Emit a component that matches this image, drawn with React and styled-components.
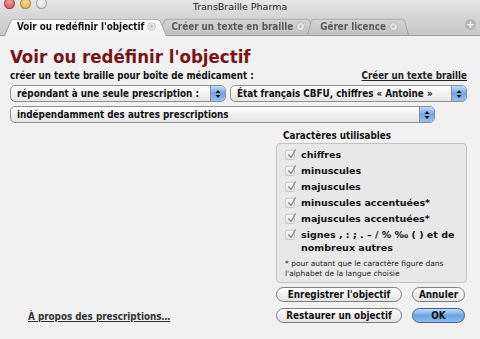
import React from "react";
import styled, { createGlobalStyle, css } from "styled-components";

const GlobalStyle = createGlobalStyle`
  html, body { margin: 0; padding: 0; background: #ececec; }
  body { font-family: "DejaVu Sans Condensed", "DejaVu Sans", sans-serif; }
`;

const Window = styled.div`
  width: 480px;
  height: 339px;
  background: #f1f1f1;
  display: flex;
  flex-direction: column;
  overflow: hidden;
`;

const TitleBar = styled.div`
  height: 14px;
  display: flex;
  align-items: flex-start;
  position: relative;
  background: linear-gradient(#e6e6e6, #d8d8d8);
`;

const Lights = styled.div`
  display: flex;
  gap: 5px;
  padding-left: 4px;
  margin-top: -2px;
`;

const Light = styled.span`
  width: 11px;
  height: 11px;
  border-radius: 50%;
  background: ${(p) => p.$c};
  box-shadow: inset 0 0 0 1px rgba(0, 0, 0, 0.25);
`;

const Title = styled.div`
  position: absolute;
  left: 0;
  right: 0;
  top: 1px;
  text-align: center;
  font-family: "DejaVu Sans", sans-serif;
  font-size: 9.5px;
  color: #222;
`;

const TabBar = styled.div`
  height: 21px;
  display: flex;
  align-items: flex-end;
  padding-left: 9px;
  background: linear-gradient(#d8d8d8, #c8c8c8);
  border-bottom: 1px solid #9b9b9b;
  position: relative;
`;

const Tab = styled.div`
  position: relative;
  height: 18px;
  display: flex;
  align-items: center;
  gap: 4px;
  padding: 0 7px 0 ${(p) => p.$pl || 8}px;
  margin-right: 1px;
  font-size: 9.8px;
  font-weight: bold;
  color: ${(p) => (p.$active ? "#111" : "#5a5a5a")};
  z-index: ${(p) => p.$z};
  &::before {
    content: "";
    position: absolute;
    top: 0;
    bottom: 0;
    left: -5px;
    right: -5px;
    z-index: -1;
    border: 1px solid #a2a2a2;
    border-bottom: none;
    border-radius: 4px 4px 0 0;
    transform: perspective(30px) rotateX(9deg);
    transform-origin: bottom;
    background: ${(p) =>
      p.$active ? "linear-gradient(#fafafa, #f1f1f1)" : "linear-gradient(#d4d4d4, #c2c2c2)"};
  }
  ${(p) =>
    p.$active &&
    css`
      height: 19px;
      margin-bottom: -1px;
    `}
`;

const TabClose = styled.span`
  width: 7px;
  height: 7px;
  border-radius: 50%;
  background: #c4c4c4;
  box-shadow: inset 0 0 0 2px #e4e4e4, 0 0 0 0.5px #aaa;
  display: inline-block;
`;

const AddTab = styled.span`
  position: absolute;
  right: 4px;
  top: 5px;
  width: 11px;
  height: 11px;
  border-radius: 50%;
  background: #b4b4b4;
  color: #fff;
  font-size: 11px;
  font-weight: bold;
  line-height: 11px;
  text-align: center;
`;

const Body = styled.div`
  flex: 1;
  padding: 9px 13px 0 10px;
  display: flex;
  flex-direction: column;
`;

const Heading = styled.h1`
  margin: 0;
  font-size: 18.5px;
  font-weight: bold;
  color: #7a1318;
  line-height: 24px;
`;

const LabelRow = styled.div`
  display: flex;
  justify-content: space-between;
  align-items: baseline;
  margin-top: 1px;
  font-size: 9.7px;
  font-weight: bold;
  color: #111;
`;

const Link = styled.span`
  text-decoration: underline;
  color: #222;
`;

const PopupRow = styled.div`
  display: flex;
  gap: 4px;
  margin-top: ${(p) => p.$top || 4}px;
`;

const Popup = styled.div`
  width: ${(p) => p.$w}px;
  height: 17px;
  box-sizing: border-box;
  display: flex;
  align-items: center;
  border: 1px solid #8e8e8e;
  border-radius: 5px;
  background: linear-gradient(#ffffff, #f1f1f1 50%, #e6e6e6);
  font-size: 9.8px;
  font-weight: bold;
  color: #111;
  overflow: hidden;
`;

const PopupText = styled.span`
  flex: 1;
  padding-left: 6px;
  white-space: nowrap;
`;

const PopupCap = styled.span`
  width: 14px;
  height: 100%;
  background: linear-gradient(#c2dbf7, #74a6e4 50%, #95c0f0);
  border-left: 1px solid #7a8fb0;
  display: flex;
  align-items: center;
  justify-content: center;
`;

const Lower = styled.div`
  flex: 1;
  display: flex;
  justify-content: space-between;
  margin-top: 7px;
`;

const AboutLink = styled.span`
  align-self: flex-end;
  margin: 0 0 17px 18px;
  font-size: 9.8px;
  font-weight: bold;
  color: #333;
  text-decoration: underline;
`;

const RightCol = styled.div`
  width: 191px;
  display: flex;
  flex-direction: column;
`;

const GroupTitle = styled.div`
  font-size: 9.8px;
  font-weight: bold;
  color: #111;
  padding-left: 7px;
  line-height: 12px;
`;

const GroupBox = styled.div`
  margin-top: 1px;
  border: 1px solid #c2c2c2;
  border-radius: 4px;
  background: #e8e8e8;
  padding: 4px 6px 3px 8px;
  display: flex;
  flex-direction: column;
`;

const CheckRow = styled.div`
  display: flex;
  align-items: flex-start;
  gap: 6px;
  font-family: "DejaVu Sans", sans-serif;
  font-size: 9.5px;
  font-weight: bold;
  color: #111;
  line-height: 13px;
  margin-bottom: 3px;
`;

const Box = styled.span`
  flex: none;
  width: 10px;
  height: 10px;
  margin-top: 2px;
  box-sizing: border-box;
  border: 1px solid #c8c8c8;
  border-radius: 2px;
  background: linear-gradient(#fafafa, #e8e8e8);
  position: relative;
`;

const Note = styled.div`
  margin-top: 2px;
  font-family: "DejaVu Sans", sans-serif;
  font-size: 7.5px;
  color: #222;
  line-height: 10px;
`;

const Buttons = styled.div`
  display: grid;
  grid-template-columns: 126px 53px;
  column-gap: 10px;
  row-gap: 6px;
  margin-top: 4px;
`;

const Button = styled.div`
  height: 15px;
  box-sizing: border-box;
  border: 1px solid #7d7d7d;
  border-radius: 8px;
  display: flex;
  align-items: center;
  justify-content: center;
  font-size: 9.8px;
  font-weight: bold;
  color: #111;
  ${(p) =>
    p.$primary
      ? css`
          background: linear-gradient(#c6dcf7, #6aa2e6 50%, #8ebcf1);
          border-color: #3f5f95;
        `
      : css`
          background: linear-gradient(#ffffff, #f0f0f0 50%, #e3e3e3);
        `}
`;

const Arrows = () => (
  <svg width="6" height="10" viewBox="0 0 6 10">
    <path d="M3 1 L5.5 4 L0.5 4 Z M3 9 L5.5 6 L0.5 6 Z" fill="#111" />
  </svg>
);

const Check = () => (
  <svg width="10" height="10" viewBox="0 0 10 10" style={{ position: "absolute", left: 1, top: -2 }}>
    <path d="M1.5 5.5 L4 8.5 L8.5 0.5" stroke="#8d8d8d" strokeWidth="1.5" fill="none" />
  </svg>
);

const items = [
  "chiffres",
  "minuscules",
  "majuscules",
  "minuscules accentuées*",
  "majuscules accentuées*",
  "signes , : ; . – / % ‰ ( ) et de nombreux autres",
];

export default function App() {
  return (
    <>
      <GlobalStyle />
      <Window>
        <TitleBar>
          <Lights>
            <Light $c="radial-gradient(circle at 50% 35%, #f4a0a0, #d23c3c)" />
            <Light $c="radial-gradient(circle at 50% 35%, #f7dc9a, #e0a12e)" />
            <Light $c="radial-gradient(circle at 50% 35%, #f6f6f6, #cfcfcf)" />
          </Lights>
          <Title>TransBraille Pharma</Title>
        </TitleBar>
        <TabBar>
          <Tab $active $z={3}>
            <span>Voir ou redéfinir l'objectif</span>
            <TabClose />
          </Tab>
          <Tab $z={1} $pl={8}>
            <span>Créer un texte en braille</span>
            <TabClose />
          </Tab>
          <Tab $z={2}>
            <span>Gérer licence</span>
            <TabClose />
          </Tab>
          <AddTab>+</AddTab>
        </TabBar>
        <Body>
          <Heading>Voir ou redéfinir l'objectif</Heading>
          <LabelRow>
            <span>créer un texte braille pour boîte de médicament :</span>
            <Link>Créer un texte braille</Link>
          </LabelRow>
          <PopupRow $top={4}>
            <Popup $w={216}>
              <PopupText>répondant à une seule prescription :</PopupText>
              <PopupCap>
                <Arrows />
              </PopupCap>
            </Popup>
            <Popup $w={237}>
              <PopupText>État français CBFU, chiffres « Antoine »</PopupText>
              <PopupCap>
                <Arrows />
              </PopupCap>
            </Popup>
          </PopupRow>
          <PopupRow>
            <Popup $w={425}>
              <PopupText>indépendamment des autres prescriptions</PopupText>
              <PopupCap>
                <Arrows />
              </PopupCap>
            </Popup>
          </PopupRow>
          <Lower>
            <AboutLink>À propos des prescriptions…</AboutLink>
            <RightCol>
              <GroupTitle>Caractères utilisables</GroupTitle>
              <GroupBox>
                {items.map((t) => (
                  <CheckRow key={t}>
                    <Box>
                      <Check />
                    </Box>
                    <span>{t}</span>
                  </CheckRow>
                ))}
                <Note>
                  * pour autant que le caractère figure dans l'alphabet de la langue choisie
                </Note>
              </GroupBox>
              <Buttons>
                <Button>Enregistrer l'objectif</Button>
                <Button>Annuler</Button>
                <Button>Restaurer un objectif</Button>
                <Button $primary>OK</Button>
              </Buttons>
            </RightCol>
          </Lower>
        </Body>
      </Window>
    </>
  );
}
